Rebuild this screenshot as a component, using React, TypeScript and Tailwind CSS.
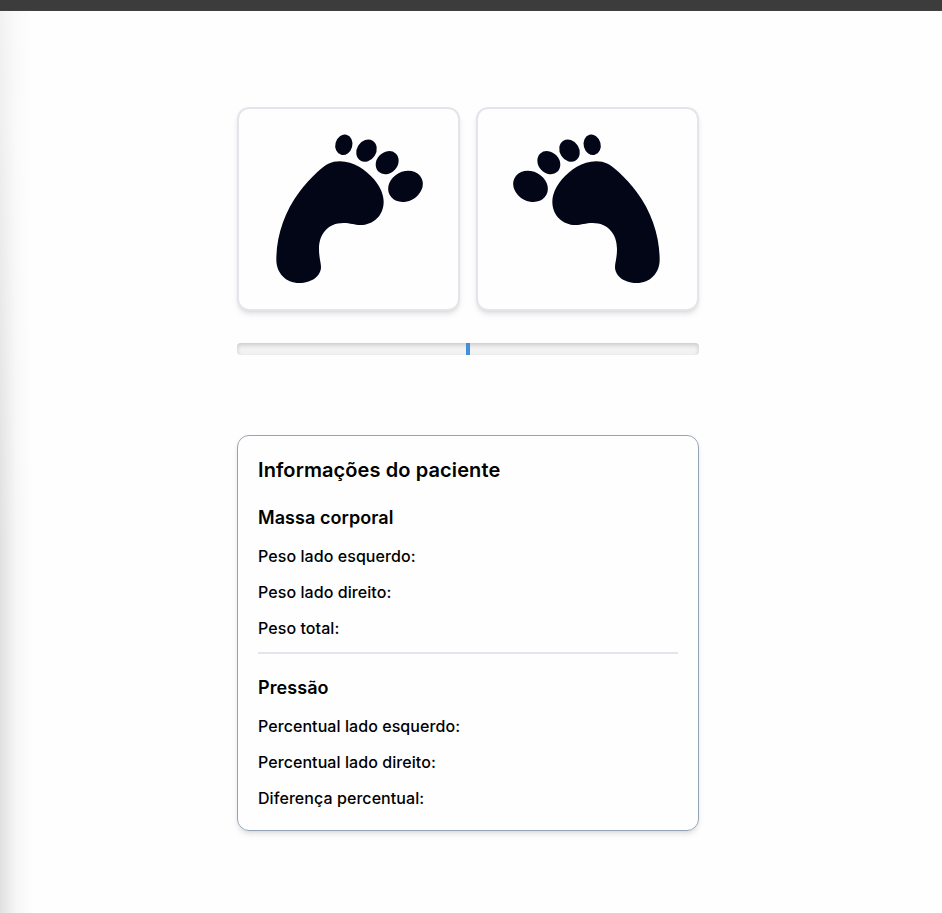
function Foot({ mirrored = false }: { mirrored?: boolean }) {
  return (
    <div className="h-[204px] flex-1 rounded-xl border-2 border-[#e4e4eb] bg-[#fefefe] shadow-md">
      <svg viewBox="27 27 657 600" className={mirrored ? "h-[200px] w-[219px] -scale-x-100" : "h-[200px] w-[219px]"} fill="#020617">
        <path d="M330 183.500C370 183.500 409 210 432 238C450 259 461 283 461 305C461 346 430 375 391 375C373 375 362 369 340 369C294 369 267 402 267 447C267 474 273 488 273 501C273 528 245 549 208 549C167 549 139 518 139 479C139 410 163 335 208 276C222 257 243 234 262 216C286 193 303 183.500 330 183.500Z" />
        <ellipse cx="341.5" cy="134.5" rx="25.5" ry="31" transform="rotate(15 341.5 134.5)" />
        <ellipse cx="409.5" cy="152" rx="29" ry="35" transform="rotate(32 409.5 152)" />
        <ellipse cx="471.5" cy="188" rx="31.5" ry="37.5" transform="rotate(43 471.5 188)" />
        <ellipse cx="526.5" cy="259" rx="54" ry="44.5" transform="rotate(-28 526.5 259)" />
      </svg>
    </div>
  );
}

function Section({ title, rows }: { title: string; rows: string[] }) {
  return (
    <div className="flex flex-col gap-3">
      <h3 className="text-lg/7 font-semibold tracking-[0.07px]">{title}</h3>
      {rows.map((row) => (
        <p key={row} className="text-base/6 font-medium tracking-[0.07px]">{row}</p>
      ))}
    </div>
  );
}

export default function App() {
  return (
    <div className="flex h-[913px] w-full flex-col overflow-hidden bg-[#fefefe] font-['Inter',sans-serif] text-black">
      <header className="h-[11px] shrink-0 border-b border-[#443f42] bg-[#3c3c3c]" />
      <div className="flex flex-1">
        <div className="w-8 shrink-0 bg-linear-to-r from-[#e0e0e0] via-[#f6f6f6] to-[#fefefe] mask-[linear-gradient(to_bottom,rgba(0,0,0,0.4),black_60%)]" />
        <main className="ml-[205px] w-[462px] pt-24">
          <div className="flex gap-4">
            <Foot />
            <Foot mirrored />
          </div>
          <div className="mt-8 flex h-3 justify-center rounded bg-[#f2f2f2] shadow-[inset_0_2px_4px_rgba(0,0,0,0.17)]">
            <div className="w-1 bg-[#4590dc] shadow-[inset_0_0_1px_#3978be]" />
          </div>
          <section className="mt-20 rounded-xl border border-[#94a3b8] px-5 py-5 shadow-md">
            <h2 className="text-xl/7 font-semibold tracking-[0.1px]">Informações do paciente</h2>
            <div className="mt-5">
              <Section title="Massa corporal" rows={["Peso lado esquerdo:", "Peso lado direito:", "Peso total:"]} />
            </div>
            <div className="mt-3 mb-5 h-0.5 bg-[#e4e4eb]" />
            <Section title="Pressão" rows={["Percentual lado esquerdo:", "Percentual lado direito:", "Diferença percentual:"]} />
          </section>
        </main>
      </div>
    </div>
  );
}
